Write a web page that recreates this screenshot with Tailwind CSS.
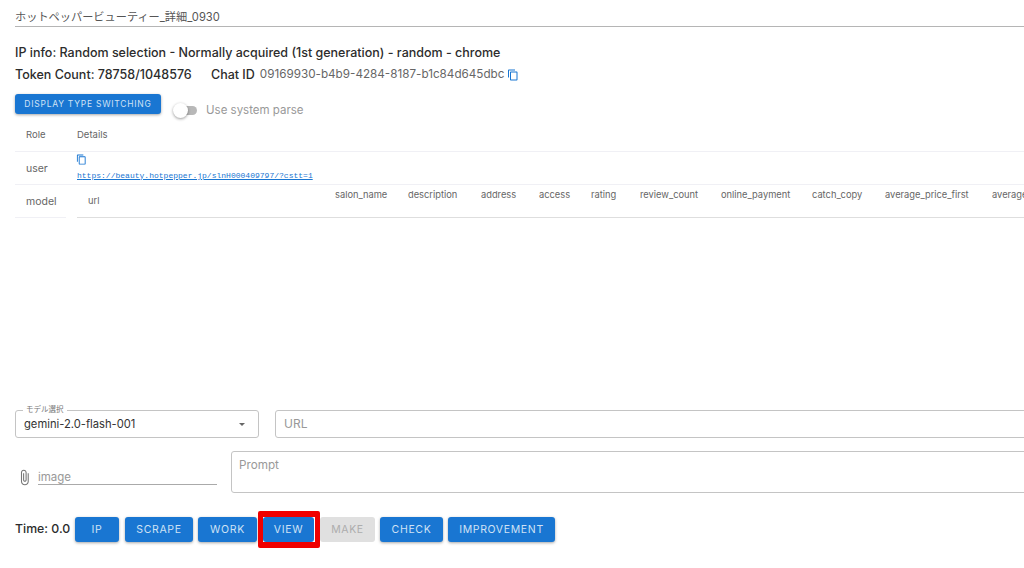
<!DOCTYPE html>
<html lang="ja">
<head>
  <meta charset="UTF-8">
  <title>ホットペッパービューティー_詳細_0930</title>
  <script src="https://cdn.jsdelivr.net/npm/@tailwindcss/browser@4"></script>
</head>
<body class="bg-white w-[1024px] h-[568px] overflow-hidden font-['Inter','Noto_Sans_CJK_JP',sans-serif] text-[#333]">
  <div class="w-[1100px] pl-[15px] flex flex-col">

    <!-- title -->
    <div class="h-[27px] mt-0 border-b border-[#b5b5b5] w-[1085px] flex items-end">
      <span class="text-[11.2px] leading-[18px] text-[#555]">ホットペッパービューティー_詳細_0930</span>
    </div>

    <p class="mt-[18px] text-[12.5px] leading-[16px] font-medium text-[#2c2c2c]">IP info: Random selection - Normally acquired (1st generation) - random - chrome</p>

    <div class="mt-[6px] flex items-center h-[16px] text-[12.5px] font-medium text-[#2c2c2c]">
      <span class="w-[175px] whitespace-nowrap">Token Count: 78758/1048576</span>
      <span class="ml-[21px]">Chat ID</span>
      <span class="ml-[5px] font-normal text-[11.7px] text-[#666]">09169930-b4b9-4284-8187-b1c84d645dbc</span>
      <svg class="ml-[3px] w-[12px] h-[12px] fill-[#1976d2]" viewBox="0 0 24 24"><path d="M16 1H4c-1.1 0-2 .9-2 2v14h2V3h12V1zm3 4H8c-1.1 0-2 .9-2 2v14c0 1.100.9 2 2 2h11c1.100 0 2-.9 2-2V7c0-1.100-.9-2-2-2zm0 16H8V7h11v14z"/></svg>
    </div>

    <div class="mt-[11px] h-[20px] flex items-start">
      <button class="w-[146px] h-[20px] bg-[#1976d2] text-[#cfe2f5] rounded-[3px] text-[8.5px] tracking-[0.75px] shadow-[0_1px_3px_rgba(0,0,0,0.35)]">DISPLAY TYPE SWITCHING</button>
      <div class="ml-[13px] mt-[8px] flex items-center">
        <div class="relative w-[23px] h-[9px] rounded-full bg-[#b8b8b8]">
          <div class="absolute left-[-1px] top-[-3px] w-[15px] h-[15px] rounded-full bg-white shadow-[0_1px_3px_rgba(0,0,0,0.4)]"></div>
        </div>
        <span class="ml-[9px] text-[11.5px] text-[#999]">Use system parse</span>
      </div>
    </div>

    <!-- messages -->
    <div class="w-[1085px] mt-[5px] text-[9.5px] text-[#666]">
      <div class="h-[33px] border-b border-[#f0f0f5] flex items-center">
        <span class="w-[62px] pl-[11px]">Role</span>
        <span>Details</span>
      </div>
      <div class="h-[33px] border-b border-[#f0f0f5] flex items-center">
        <span class="w-[62px] pl-[11px] pt-[2px] text-[10.5px]">user</span>
        <div class="flex flex-col">
          <svg class="w-[11px] h-[11px] ml-[-1px] mt-[-2px] fill-[#1976d2]" viewBox="0 0 24 24"><path d="M16 1H4c-1.1 0-2 .9-2 2v14h2V3h12V1zm3 4H8c-1.1 0-2 .9-2 2v14c0 1.100.9 2 2 2h11c1.100 0 2-.9 2-2V7c0-1.100-.9-2-2-2zm0 16H8V7h11v14z"/></svg>
          <a class="mt-[6px] font-['Liberation_Mono',monospace] text-[8.03px] leading-[10px] text-[#1976d2] underline whitespace-nowrap" href="#">https://beauty.hotpepper.jp/slnH000409797/?cstt=1</a>
        </div>
      </div>
      <div class="h-[33px] flex">
        <span class="w-[51px] h-[33px] pl-[11px] pt-[2px] border-b border-[#f0f0f5] flex items-center text-[10.5px]">model</span>
        <div class="ml-[11px] w-[1023px] h-[33px] border-b border-[#dedede] flex text-[9.3px]">
          <span class="w-[258px] pl-[11px] flex items-center">url</span>
          <span class="w-[73px] pt-[3px]">salon_name</span>
          <span class="w-[73px] pt-[3px]">description</span>
          <span class="w-[58px] pt-[3px]">address</span>
          <span class="w-[52px] pt-[3px]">access</span>
          <span class="w-[49px] pt-[3px]">rating</span>
          <span class="w-[81px] pt-[3px]">review_count</span>
          <span class="w-[91px] pt-[3px]">online_payment</span>
          <span class="w-[73px] pt-[3px]">catch_copy</span>
          <span class="w-[107px] pt-[3px]">average_price_first</span>
          <span class="pt-[3px] whitespace-nowrap">average_price</span>
        </div>
      </div>
    </div>

    <!-- inputs -->
    <div class="mt-[192px] flex items-start">
      <div class="relative w-[244px] h-[28px] border border-[#c4c4c4] rounded-[3px] flex items-center justify-between pl-[8px] pr-[13px]">
        <span class="absolute left-[7px] top-[-6px] bg-white px-[3px] text-[7.5px] leading-[10px] text-[#777]">モデル選択</span>
        <span class="text-[11.2px] text-[#333]">gemini-2.0-flash-001</span>
        <span class="w-0 h-0 mt-[1px] border-x-[3.5px] border-x-transparent border-t-[3.5px] border-t-[#666]"></span>
      </div>
      <div class="ml-[16px] w-[800px] h-[28px] border border-[#c4c4c4] rounded-[3px] flex items-center pl-[8px] text-[12px] text-[#999]">URL</div>
    </div>

    <div class="mt-[13px] flex items-end">
      <svg class="w-[17px] h-[17px] mb-[7px] ml-[1px] fill-[#777]" viewBox="0 0 24 24"><path d="M16.500 6v11.500c0 2.210-1.790 4-4 4s-4-1.790-4-4V5c0-1.380 1.120-2.500 2.500-2.500s2.500 1.120 2.500 2.500v10.500c0 .55-.45 1-1 1s-1-.45-1-1V6H10v9.500c0 1.380 1.120 2.500 2.500 2.500s2.500-1.120 2.500-2.500V5c0-2.210-1.790-4-4-4S7 2.790 7 5v12.500c0 3.040 2.460 5.500 5.500 5.500s5.500-2.460 5.500-5.500V6h-1.500z"/></svg>
      <div class="ml-[5px] w-[179px] h-[21px] mb-[8px] pt-[8px] border-b border-[#aaa] flex items-center text-[11.5px] text-[#999]">image</div>
      <div class="ml-[14px] w-[800px] h-[42px] border border-[#c4c4c4] rounded-[3px] pl-[7px] pt-[5px] text-[11.7px] text-[#999]">Prompt</div>
    </div>

    <!-- actions -->
    <div class="mt-[24px] flex items-center h-[25px]">
      <span class="text-[12.3px] font-medium text-[#2c2c2c] w-[60px]">Time: 0.0</span>
      <button class="w-[44px] h-[25px] bg-[#1976d2] text-[#cfe2f5] rounded-[3px] text-[10.5px] tracking-[0.65px] shadow-[0_1px_3px_rgba(0,0,0,0.35)]">IP</button>
      <button class="ml-[6px] w-[68px] h-[25px] bg-[#1976d2] text-[#cfe2f5] rounded-[3px] text-[10.5px] tracking-[0.65px] shadow-[0_1px_3px_rgba(0,0,0,0.35)]">SCRAPE</button>
      <button class="ml-[5px] w-[59px] h-[25px] bg-[#1976d2] text-[#cfe2f5] rounded-[3px] text-[10.5px] tracking-[0.65px] shadow-[0_1px_3px_rgba(0,0,0,0.35)]">WORK</button>
      <div class="relative ml-[6px] w-[51px] h-[25px]">
        <button class="block w-[51px] h-[25px] bg-[#1976d2] text-[#cfe2f5] rounded-[3px] text-[10.5px] tracking-[0.65px]">VIEW</button>
        <div class="absolute left-[-5px] top-[-6px] w-[62px] h-[37px] border-x-[5px] border-y-[6px] border-[#f00000] rounded-[2px]"></div>
      </div>
      <button class="ml-[6px] w-[55px] h-[25px] bg-[#e0e0e0] text-[#adadad] rounded-[3px] text-[10.5px] tracking-[0.65px]">MAKE</button>
      <button class="ml-[5px] w-[63px] h-[25px] bg-[#1976d2] text-[#cfe2f5] rounded-[3px] text-[10.5px] tracking-[0.65px] shadow-[0_1px_3px_rgba(0,0,0,0.35)]">CHECK</button>
      <button class="ml-[5px] w-[107px] h-[25px] bg-[#1976d2] text-[#cfe2f5] rounded-[3px] text-[10.5px] tracking-[0.65px] shadow-[0_1px_3px_rgba(0,0,0,0.35)]">IMPROVEMENT</button>
    </div>
  </div>
</body>
</html>
